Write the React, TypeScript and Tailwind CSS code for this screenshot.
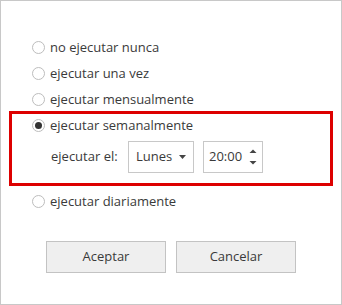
import React from "react";

type RadioProps = { checked?: boolean };

function Radio({ checked = false }: RadioProps) {
  return (
    <span className="flex h-[13px] w-[13px] shrink-0 items-center justify-center rounded-full border border-[#bdbdbd] bg-white">
      {checked ? <span className="h-[7px] w-[7px] rounded-full bg-[#333333]" /> : null}
    </span>
  );
}

function Option({ label, checked }: { label: string; checked?: boolean }) {
  return (
    <div className="flex h-[26px] items-center gap-[5px] pl-[31px]">
      <Radio checked={checked} />
      <span className="pt-[1px]">{label}</span>
    </div>
  );
}

export default function App() {
  return (
    <div
      className="h-[305px] w-[342px] border border-[#c8c8c8] bg-white pt-[33px] text-[13px] text-[#3a3a3a]"
      style={{ fontFamily: '"Open Sans", "Noto Sans", sans-serif' }}
    >
      <Option label="no ejecutar nunca" />
      <Option label="ejecutar una vez" />
      <Option label="ejecutar mensualmente" />

      <div className="ml-[8px] mt-[-1px] w-[324px] border-[3px] border-[#dd0000] pb-[10px] pl-[20px]">
        <div className="flex h-[22px] items-center gap-[5px]">
          <Radio checked />
          <span className="pt-[1px]">ejecutar semanalmente</span>
        </div>
        <div className="mt-[5px] flex h-[32px] items-center pl-[19px]">
          <span className="w-[77px]">ejecutar el:</span>
          <div className="flex h-[32px] w-[66px] items-center justify-between border border-[#c8c8c8] pl-[7px] pr-[7px]">
            <span>Lunes</span>
            <svg width="7" height="4" viewBox="0 0 7 4">
              <path d="M0 0h7L3.5 4z" fill="#444" />
            </svg>
          </div>
          <div className="ml-[9px] flex h-[32px] w-[60px] items-center justify-between border border-[#c8c8c8] pl-[5px] pr-[5px]">
            <span>20:00</span>
            <svg width="8" height="20" viewBox="0 0 8 20">
              <path d="M0.5 6L4 2.5L7.5 6z" fill="#444" />
              <path d="M0.5 14h7L4 17.5z" fill="#444" />
            </svg>
          </div>
        </div>
      </div>

      <div className="mt-[2px]">
        <Option label="ejecutar diariamente" />
      </div>

      <div className="ml-[45px] mt-[27px] flex gap-[10px]">
        <button type="button" className="h-[32px] w-[120px] border border-[#c3c3c3] bg-[#efefef] text-[#3a3a3a]">
          Aceptar
        </button>
        <button type="button" className="h-[32px] w-[120px] border border-[#c3c3c3] bg-[#efefef] text-[#3a3a3a]">
          Cancelar
        </button>
      </div>
    </div>
  );
}
